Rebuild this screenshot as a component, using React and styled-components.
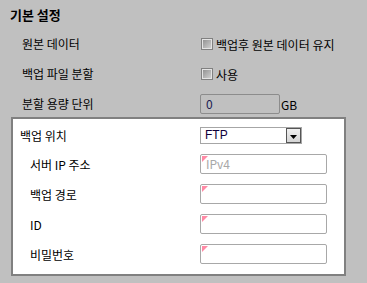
import styled, { createGlobalStyle } from "styled-components";

const GlobalStyle = createGlobalStyle`
  html, body {
    margin: 0;
    padding: 0;
    background: #c0c0c0;
  }
  body {
    font-family: "Noto Sans CJK KR", "Liberation Sans", sans-serif;
    font-size: 12px;
    color: #000;
  }
`;

export default function App() {
  return (
    <>
      <GlobalStyle />
      <Page>
        <Heading>기본 설정</Heading>
        <TopRows>
          <Row>
            <Label>원본 데이터</Label>
            <CheckLabel>
              <Checkbox />
              백업후 원본 데이터 유지
            </CheckLabel>
          </Row>
          <Row>
            <Label>백업 파일 분할</Label>
            <CheckLabel>
              <Checkbox />
              사용
            </CheckLabel>
          </Row>
          <Row>
            <Label>분할 용량 단위</Label>
            <Control>
              <SizeInput>0</SizeInput>
              <Unit>GB</Unit>
            </Control>
          </Row>
        </TopRows>
        <Panel>
          <PanelRow $short>
            <PanelLabel>백업 위치</PanelLabel>
            <Select>
              <SelectText>FTP</SelectText>
              <SelectButton>
                <svg width="7" height="4" viewBox="0 0 7 4">
                  <path d="M0 0h7L3.5 4z" fill="#000" />
                </svg>
              </SelectButton>
            </Select>
          </PanelRow>
          <PanelRow>
            <PanelLabel $indent>서버 IP 주소</PanelLabel>
            <Field $placeholder>IPv4</Field>
          </PanelRow>
          <PanelRow>
            <PanelLabel $indent>백업 경로</PanelLabel>
            <Field />
          </PanelRow>
          <PanelRow>
            <PanelLabel $indent>ID</PanelLabel>
            <Field />
          </PanelRow>
          <PanelRow>
            <PanelLabel $indent>비밀번호</PanelLabel>
            <Field />
          </PanelRow>
        </Panel>
      </Page>
    </>
  );
}

const Page = styled.div`
  width: 367px;
  height: 283px;
  padding-top: 5px;
  box-sizing: border-box;
`;

const Heading = styled.div`
  height: 20px;
  line-height: 20px;
  padding-left: 10px;
  font-weight: bold;
  font-size: 13px;
`;

const TopRows = styled.div`
  display: flex;
  flex-direction: column;
  gap: 10px;
  margin-top: 9px;
  padding-left: 22px;
`;

const Row = styled.div`
  display: grid;
  grid-template-columns: 178px 1fr;
  align-items: center;
  height: 20px;
`;

const Label = styled.span`
  line-height: 20px;
`;

const CheckLabel = styled.label`
  display: flex;
  align-items: center;
  gap: 3px;
  margin-left: 1px;
`;

const Checkbox = styled.span`
  display: inline-block;
  width: 12px;
  height: 12px;
  box-sizing: border-box;
  border: 1px solid #808080;
  background: linear-gradient(135deg, #8c8c8c, #d6d6d6);
  box-shadow: inset 0 0 0 1px #e4e4e4;
`;

const Control = styled.div`
  display: flex;
  align-items: center;
`;

const SizeInput = styled.div`
  width: 80px;
  height: 20px;
  box-sizing: border-box;
  border: 1px solid #8c8c8c;
  border-radius: 2px;
  padding-left: 5px;
  line-height: 18px;
  color: #1a1a50;
`;

const Unit = styled.span`
  margin-left: 1px;
`;

const Panel = styled.div`
  margin: 3px 0 0 11px;
  width: 335px;
  box-sizing: border-box;
  border: 2px solid #808080;
  background: #fff;
  padding: 8px 0 10px 7px;
  display: flex;
  flex-direction: column;
  gap: 10px;
`;

const PanelRow = styled.div`
  display: grid;
  grid-template-columns: 180px 1fr;
  align-items: center;
  height: ${(p) => (p.$short ? "17px" : "20px")};
`;

const PanelLabel = styled.span`
  padding-left: ${(p) => (p.$indent ? "10px" : "0")};
`;

const Select = styled.div`
  width: 102px;
  height: 17px;
  box-sizing: border-box;
  border: 1px solid #a6a6a6;
  display: flex;
  align-items: stretch;
`;

const SelectText = styled.span`
  flex: 1;
  padding-left: 4px;
  line-height: 15px;
  font-family: "Liberation Sans", sans-serif;
  font-size: 12px;
  color: #10003a;
`;

const SelectButton = styled.span`
  width: 15px;
  box-sizing: border-box;
  border: 1px solid #555;
  background: linear-gradient(#f0f0f0, #d4d4d4);
  display: flex;
  align-items: center;
  justify-content: center;
  padding-top: 2px;
`;

const Field = styled.div`
  position: relative;
  width: 127px;
  height: 20px;
  box-sizing: border-box;
  border: 1px solid #a8a8a8;
  border-radius: 2px;
  padding-left: 5px;
  line-height: 18px;
  color: ${(p) => (p.$placeholder ? "#a8a8a8" : "#000")};

  &::before {
    content: "";
    position: absolute;
    top: 1px;
    left: 1px;
    border-top: 6px solid #ff8aa5;
    border-right: 6px solid transparent;
  }
`;
